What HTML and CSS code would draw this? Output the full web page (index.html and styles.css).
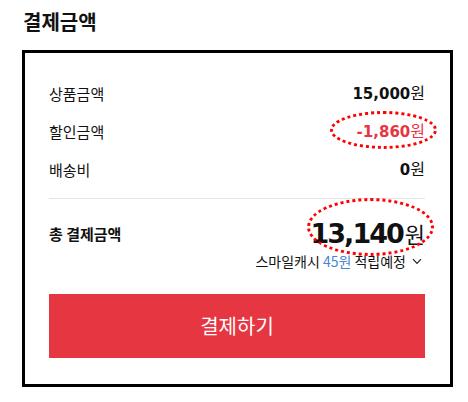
FILE: index.html
```html
<!DOCTYPE html>
<html>
<head>
  <meta charset="utf-8">
  <meta name="viewport" content="width=device-width">
  <title>결제금액</title>
  <link rel="stylesheet" href="styles.css">
</head>
<body>
  <h2 class="title">결제금액</h2>
  <div class="pay-box">
    <ul class="price-list">
      <li class="row">
        <span class="label">상품금액</span>
        <span class="value"><b class="num">15,000</b>원</span>
      </li>
      <li class="row">
        <span class="label">할인금액</span>
        <span class="value sale"><b class="num">-1,860</b>원<i class="mark mark-sale"></i></span>
      </li>
      <li class="row">
        <span class="label">배송비</span>
        <span class="value"><b class="num">0</b>원</span>
      </li>
    </ul>
    <div class="total">
      <div class="row total-row">
        <span class="label">총 결제금액</span>
        <span class="value big"><b class="num">13,140</b>원<i class="mark mark-total"></i></span>
      </div>
      <div class="cash">
        <span>스마일캐시 <em class="point">45원</em> 적립예정</span>
        <svg class="chev" width="10" height="7" viewBox="0 0 10 7"><polyline points="1,1.2 5,5.4 9,1.2" fill="none" stroke="#222" stroke-width="1.2"/></svg>
      </div>
    </div>
    <a href="javascript:;" class="pay-btn">결제하기</a>
  </div>
</body>
</html>
```

FILE: styles.css
```css
body{
  margin: 0;
  font-family: "Noto Sans CJK KR", "Noto Sans", sans-serif;
  color: #111;
}
.title{
  margin: 0;
  padding: 8px 0 0 23px;
  height: 50px;
  box-sizing: border-box;
  font-size: 20px;
  line-height: 28px;
  font-weight: bold;
}
.pay-box{
  margin-left: 22px;
  border: 3px solid #000;
  padding: 21px 25px 26px 24px;
  box-sizing: border-box;
  width: 431px;
}
.price-list{
  list-style: none;
  margin: 0;
  padding: 0 0 10px;
  border-bottom: 1px solid #e4e4e4;
}
.row{
  display: flex;
  justify-content: space-between;
  align-items: center;
  height: 38px;
  font-size: 15px;
}
.value{
  position: relative;
  line-height: 38px;
  font-size: 16px;
}
.num{
  font-family: "DejaVu Sans", sans-serif;
  font-weight: bold;
  font-size: 15px;
}
.sale{
  color: #e63641;
}
.total{
  padding-top: 15px;
}
.total-row .label{
  font-weight: bold;
}
.big{
  font-size: 22px;
}
.big .num{
  font-size: 27px;
  letter-spacing: -2px;
  margin-right: 2px;
}
.mark{
  position: absolute;
  border: 3px dotted #f00;
  border-radius: 50%;
  box-sizing: border-box;
}
.mark-sale{
  right: -12px;
  top: 0;
  width: 107px;
  height: 38px;
}
.mark-total{
  right: -9px;
  top: -16px;
  width: 127px;
  height: 58px;
}
.cash{
  display: flex;
  justify-content: flex-end;
  align-items: center;
  height: 19px;
  font-size: 14px;
  line-height: 19px;
  padding-right: 3px;
}
.point{
  font-style: normal;
  color: #4a84d6;
}
.chev{
  margin-left: 6px;
}
.pay-btn{
  display: block;
  margin-top: 23px;
  height: 64px;
  line-height: 64px;
  text-align: center;
  background-color: #e63641;
  color: #fff;
  font-size: 20px;
  text-decoration: none;
}
```
